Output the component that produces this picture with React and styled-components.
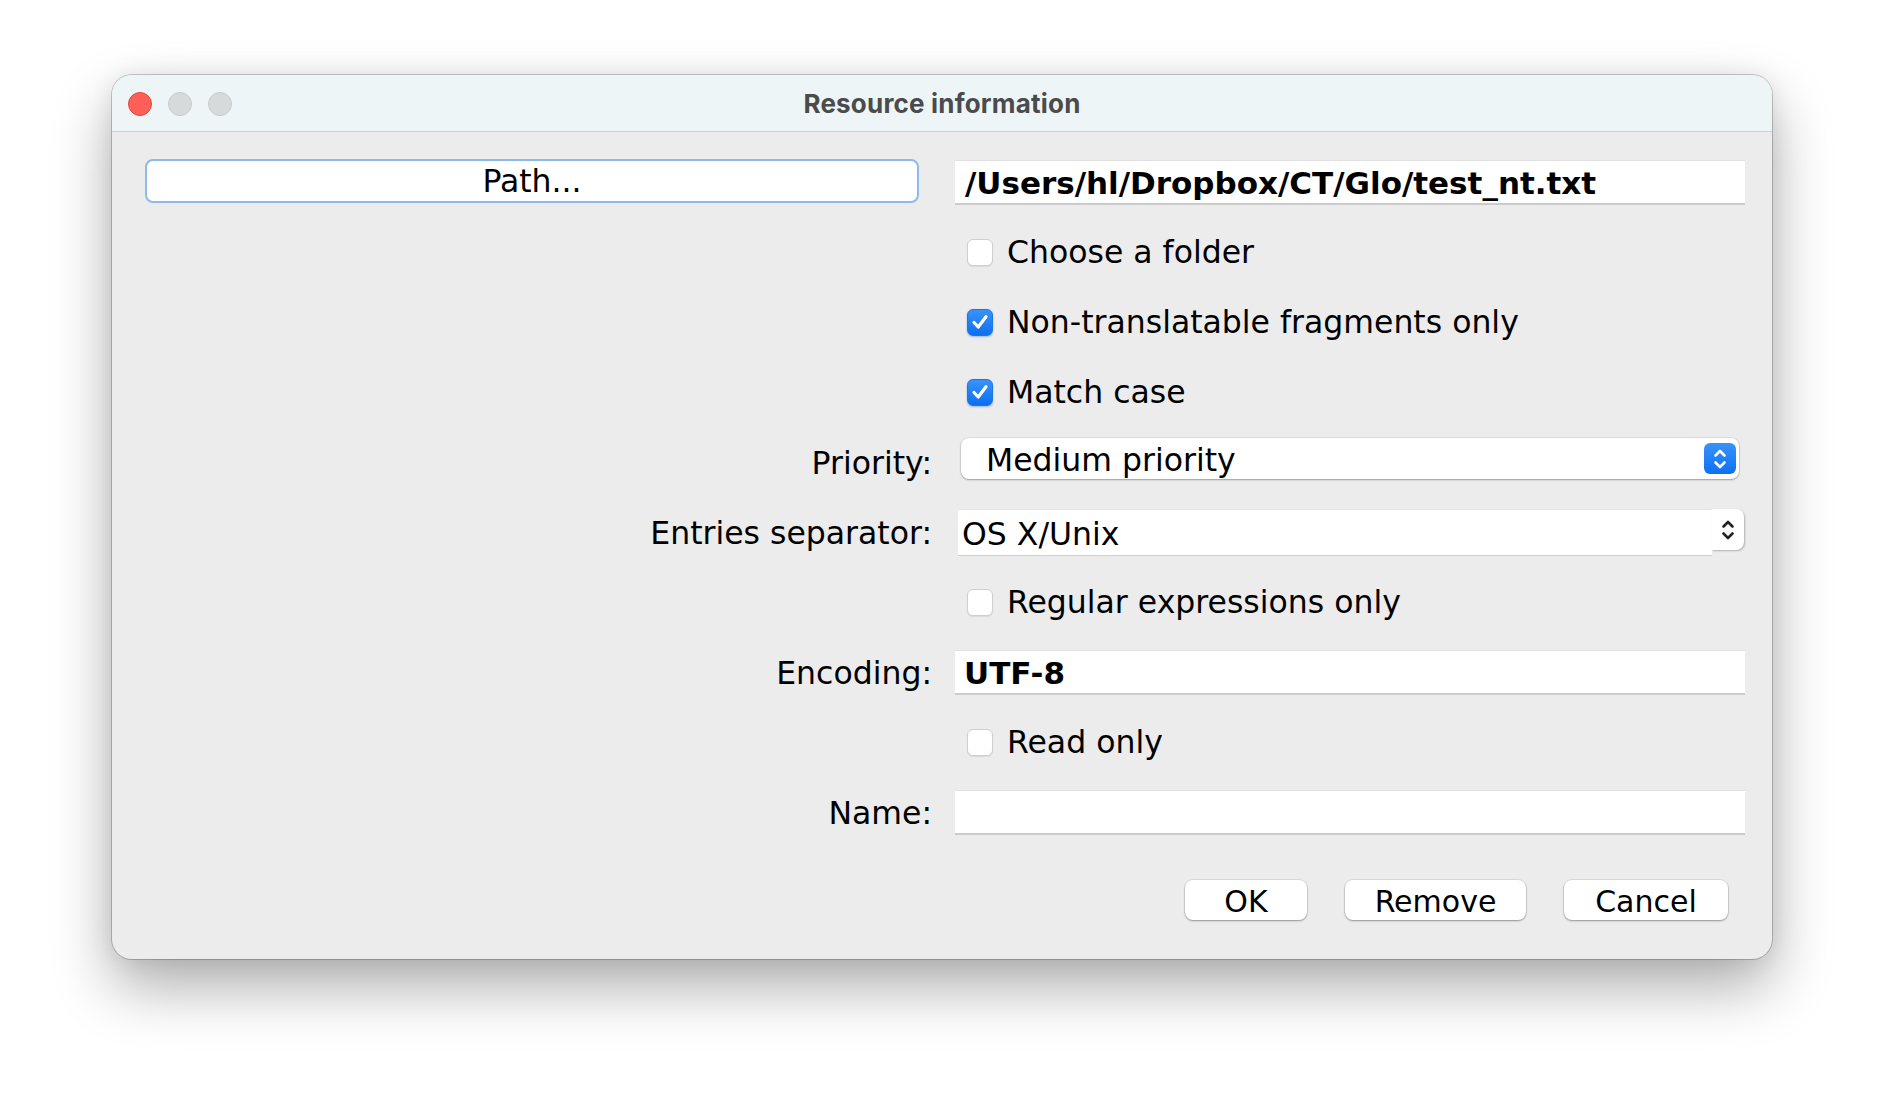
import React from 'react'
import styled, { createGlobalStyle } from 'styled-components'

const GlobalStyle = createGlobalStyle`
    html, body {
        margin: 0;
        padding: 0;
        background: #ffffff;
    }
    body {
        font-family: "DejaVu Sans", "Liberation Sans", sans-serif;
        color: #000;
    }
`

const Stage = styled.div`
    width: 1884px;
    height: 1108px;
    padding: 75px 0 0 112px;
    box-sizing: border-box;
    overflow: hidden;
`

const Window = styled.div`
    width: 1660px;
    height: 884px;
    border-radius: 20px;
    background: #ececec;
    overflow: hidden;
    box-shadow: 0 0 0 1px rgba(0, 0, 0, 0.2), 0 28px 60px rgba(0, 0, 0, 0.32), 0 0 24px rgba(0, 0, 0, 0.08);
    display: flex;
    flex-direction: column;
`

const TitleBar = styled.div`
    height: 56px;
    flex: none;
    background: #eef5f7;
    border-bottom: 1px solid #cbcfd1;
    display: grid;
    grid-template-columns: 1fr auto 1fr;
    align-items: center;
    padding: 0 16px;
`

const Lights = styled.div`
    display: flex;
    gap: 16px;
    margin-top: 1px;
`

const Light = styled.span`
    width: 24px;
    height: 24px;
    border-radius: 50%;
    box-sizing: border-box;
    background: ${p => (p.$red ? '#fe5f57' : '#d6dadb')};
    border: 1px solid ${p => (p.$red ? '#e2463f' : '#c4c9cb')};
`

const Title = styled.div`
    font-family: Inter, "Liberation Sans", sans-serif;
    font-weight: 700;
    font-size: 26px;
    color: #4b4b4b;
    letter-spacing: 0.2px;
`

const Body = styled.div`
    flex: 1;
    padding: 27px 27px 0 33px;
    display: flex;
    flex-direction: column;
`

const Form = styled.div`
    display: grid;
    grid-template-columns: 783px 790px;
    column-gap: 27px;
    grid-auto-rows: 46px;
    row-gap: 24px;
    font-size: 31.5px;
`

const Label = styled.div`
    grid-column: 1;
    text-align: right;
    align-self: center;
    white-space: nowrap;
    padding-top: 2px;
    margin-right: -4px;
`

const Cell = styled.div`
    grid-column: 2;
    display: flex;
    align-items: center;
    min-width: 0;
`

const PathButton = styled.button`
    grid-column: 1;
    align-self: start;
    height: 44px;
    margin-right: 9px;
    background: #fff;
    border: 2px solid #8db9ee;
    border-radius: 8px;
    font: inherit;
    font-size: 31.5px;
    color: #000;
    padding: 0;
    line-height: 38px;
`

const TextField = styled.div`
    width: 100%;
    height: 45px;
    box-sizing: border-box;
    background: #fff;
    border-top: 1px solid #e0e0e0;
    border-bottom: 2px solid #cbcbcb;
    display: flex;
    align-items: center;
    padding: 2px 0 0 ${p => p.$pad || 9}px;
    font-weight: ${p => (p.$bold ? 700 : 400)};
    font-size: ${p => (p.$bold ? '31px' : 'inherit')};
    white-space: nowrap;
`

const CheckRow = styled.label`
    display: flex;
    align-items: center;
    gap: 14px;
    margin-left: 12px;
    white-space: nowrap;
`

const Box = styled.span`
    width: 26px;
    height: 27px;
    box-sizing: border-box;
    border-radius: 6px;
    display: flex;
    align-items: center;
    justify-content: center;
    background: ${p => (p.$checked ? 'linear-gradient(#3a93fb, #0b6ff0)' : '#fff')};
    border: 1px solid ${p => (p.$checked ? '#1f74e6' : '#cfcfcf')};
    box-shadow: ${p => (p.$checked ? '0 1px 2px rgba(0,80,200,0.35)' : '0 1px 1px rgba(0,0,0,0.08)')};
`

const Combo = styled.div`
    width: 778px;
    height: 41px;
    margin: -1px 0 0 6px;
    align-self: start;
    box-sizing: border-box;
    background: #fff;
    border-radius: 8px;
    box-shadow: 0 0 0 1px rgba(0, 0, 0, 0.06), 0 1px 2px rgba(0, 0, 0, 0.3);
    display: flex;
    align-items: center;
    justify-content: space-between;
    padding: 2px 3px 0 25px;
`

const Stepper = styled.span`
    width: 32px;
    height: 31px;
    border-radius: 6px;
    display: flex;
    align-items: center;
    justify-content: center;
    background: ${p => (p.$blue ? 'linear-gradient(#3a93fb, #0d70f0)' : 'transparent')};
    margin-top: -2px;
`

const EditCombo = styled.div`
    width: 786px;
    margin-left: 3px;
    height: 47px;
    align-self: start;
    display: flex;
`

const EditField = styled.div`
    flex: 1;
    height: 47px;
    box-sizing: border-box;
    background: #fff;
    border-top: 1px solid #e4e4e4;
    border-bottom: 1px solid #cfcfcf;
    display: flex;
    align-items: center;
    padding: 2px 0 0 4px;
    white-space: nowrap;
`

const EditArrow = styled.div`
    width: 32px;
    height: 41px;
    box-sizing: border-box;
    background: #fff;
    border-radius: 0 8px 8px 0;
    box-shadow: 1px 1px 2px rgba(0, 0, 0, 0.25);
    display: flex;
    align-items: center;
    justify-content: center;
`

const Buttons = styled.div`
    display: flex;
    justify-content: flex-end;
    gap: 38px;
    margin: 45px 17px 0 0;
`

const Button = styled.button`
    width: ${p => p.$w}px;
    height: 40px;
    background: #fff;
    border: none;
    border-radius: 8px;
    box-shadow: 0 0 0 1px rgba(0, 0, 0, 0.07), 0 1px 2px rgba(0, 0, 0, 0.32);
    font-family: "DejaVu Sans", "Liberation Sans", sans-serif;
    font-size: 30px;
    color: #000;
    padding: 2px 0 0;
`

const Check = () => (
    <svg width="18" height="16" viewBox="0 0 18 16">
        <path d="M3 8.5 L7.2 13 L15 2.8" fill="none" stroke="#fff" strokeWidth="3.2" strokeLinecap="round" strokeLinejoin="round" />
    </svg>
)

const Chevrons = ({ color }) => (
    <svg width="16" height="24" viewBox="0 0 16 24">
        <path d="M3.5 8.5 L8 4 L12.5 8.5 M3.5 15.5 L8 20 L12.5 15.5" fill="none" stroke={color} strokeWidth="2.6" strokeLinecap="round" strokeLinejoin="round" />
    </svg>
)

const CheckBox = ({ checked, children }) => (
    <Cell>
        <CheckRow>
            <Box $checked={checked}>{checked && <Check />}</Box>
            <span>{children}</span>
        </CheckRow>
    </Cell>
)

export default function App() {
    return (
        <Stage>
            <GlobalStyle />
            <Window>
                <TitleBar>
                    <Lights>
                        <Light $red />
                        <Light />
                        <Light />
                    </Lights>
                    <Title>Resource information</Title>
                    <span />
                </TitleBar>
                <Body>
                    <Form>
                        <PathButton>Path...</PathButton>
                        <Cell>
                            <TextField $bold $pad={10}>/Users/hl/Dropbox/CT/Glo/test_nt.txt</TextField>
                        </Cell>

                        <CheckBox>Choose a folder</CheckBox>
                        <CheckBox checked>Non-translatable fragments only</CheckBox>
                        <CheckBox checked>Match case</CheckBox>

                        <Label>Priority:</Label>
                        <Cell>
                            <Combo>
                                <span>Medium priority</span>
                                <Stepper $blue>
                                    <Chevrons color="#fff" />
                                </Stepper>
                            </Combo>
                        </Cell>

                        <Label>Entries separator:</Label>
                        <Cell>
                            <EditCombo>
                                <EditField>OS X/Unix</EditField>
                                <EditArrow>
                                    <Chevrons color="#222" />
                                </EditArrow>
                            </EditCombo>
                        </Cell>

                        <CheckBox>Regular expressions only</CheckBox>

                        <Label>Encoding:</Label>
                        <Cell>
                            <TextField $bold>UTF-8</TextField>
                        </Cell>

                        <CheckBox>Read only</CheckBox>

                        <Label>Name:</Label>
                        <Cell>
                            <TextField />
                        </Cell>
                    </Form>
                    <Buttons>
                        <Button $w={122}>OK</Button>
                        <Button $w={181}>Remove</Button>
                        <Button $w={164}>Cancel</Button>
                    </Buttons>
                </Body>
            </Window>
        </Stage>
    )
}
